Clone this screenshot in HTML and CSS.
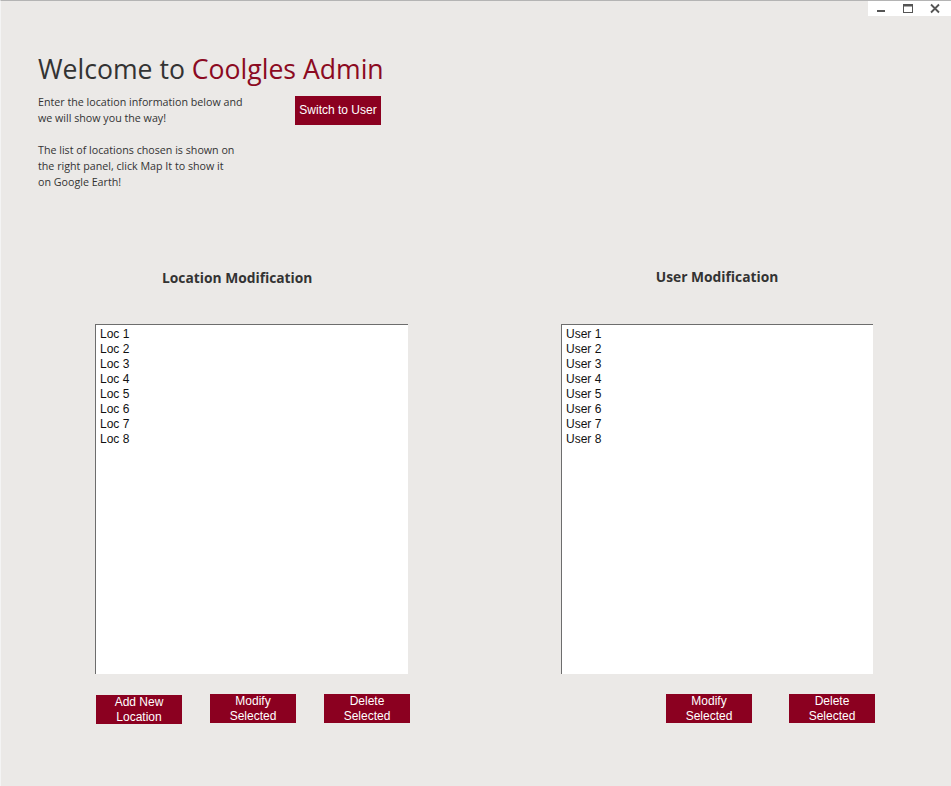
FILE: index.html
```html
<!DOCTYPE html>
<html>
<head>
<meta charset="utf-8">
<link rel="stylesheet" href="styles.css">
</head>
<body>
<div class="window">
  <div class="controls">
    <span class="ctl"><svg width="12" height="12" viewBox="0 0 12 12"><rect x="2" y="7" width="8" height="2" fill="#555"/></svg></span>
    <span class="ctl"><svg width="12" height="12" viewBox="0 0 12 12"><rect x="1.5" y="1.5" width="9" height="8" fill="none" stroke="#555" stroke-width="1"/><rect x="1.5" y="1.5" width="9" height="2" fill="#555"/></svg></span>
    <span class="ctl"><svg width="12" height="12" viewBox="0 0 12 12"><path d="M2 1.5 L10 9.5 M10 1.5 L2 9.5" stroke="#555" stroke-width="1.8"/></svg></span>
  </div>
  <header class="intro">
    <h1 class="title">Welcome to <span class="brand">Coolgles Admin</span></h1>
    <div class="intro-row">
      <div class="intro-text">
        <p>Enter the location information below and<br>we will show you the way!</p>
        <p>The list of locations chosen is shown on<br>the right panel, click Map It to show it<br>on Google Earth!</p>
      </div>
      <button class="btn btn-switch">Switch to User</button>
    </div>
  </header>
  <main class="panels">
    <section class="panel panel-left">
      <h2 class="panel-title">Location Modification</h2>
      <div class="listbox">
        <div>Loc 1</div><div>Loc 2</div><div>Loc 3</div><div>Loc 4</div>
        <div>Loc 5</div><div>Loc 6</div><div>Loc 7</div><div>Loc 8</div>
      </div>
      <div class="actions actions-left">
        <button class="btn btn-add">Add New<br>Location</button>
        <button class="btn">Modify<br>Selected</button>
        <button class="btn">Delete<br>Selected</button>
      </div>
    </section>
    <section class="panel panel-right">
      <h2 class="panel-title center">User Modification</h2>
      <div class="listbox">
        <div>User 1</div><div>User 2</div><div>User 3</div><div>User 4</div>
        <div>User 5</div><div>User 6</div><div>User 7</div><div>User 8</div>
      </div>
      <div class="actions actions-right">
        <button class="btn">Modify<br>Selected</button>
        <button class="btn">Delete<br>Selected</button>
      </div>
    </section>
  </main>
</div>
</body>
</html>
```
FILE: styles.css
```css
html, body {
  margin: 0;
  padding: 0;
  background: #ebe9e7;
}
.window {
  position: relative;
  width: 950px;
  height: 785px;
  border-top: 1px solid #b4b4b4;
  border-left: 1px solid #f4f4f4;
  background: #ebe9e7;
  font-family: "Liberation Sans", Arial, sans-serif;
  overflow: hidden;
}
.controls {
  position: absolute;
  top: 0;
  right: 0;
  width: 83px;
  height: 15px;
  background: #fff;
  display: flex;
  justify-content: space-around;
  align-items: center;
  padding-right: 3px;
  box-sizing: border-box;
}
.ctl {
  display: flex;
  width: 20px;
  justify-content: center;
}
.intro {
  padding: 50px 0 0 37px;
}
.title {
  margin: 0;
  font-family: "Open Sans", "DejaVu Sans", sans-serif;
  font-weight: 400;
  font-size: 26.6px;
  line-height: 36px;
  color: #333;
  letter-spacing: 0;
}
.brand {
  color: #8b0a22;
}
.intro-row {
  display: flex;
  align-items: flex-start;
  margin-top: 7px;
}
.intro-text {
  width: 257px;
  font-family: "Open Sans", "DejaVu Sans", sans-serif;
  font-size: 10.7px;
  line-height: 16px;
  color: #333;
}
.intro-text p {
  margin: 0 0 16px 0;
}
.btn {
  flex-shrink: 0;
  width: 86px;
  height: 29px;
  padding: 0;
  border: none;
  background: #8b0020;
  color: #fff;
  font-family: "Liberation Sans", Arial, sans-serif;
  font-size: 12px;
  line-height: 15px;
}
.btn-switch {
  margin-top: 2px;
  height: 29px;
}
.panels {
  display: flex;
  padding: 63px 0 0 94px;
}
.panel {
  width: 313px;
}
.panel-right {
  margin-left: 153px;
  width: 314px;
}
.panel-title {
  margin: 0;
  height: 55px;
  font-family: "Open Sans", "DejaVu Sans", sans-serif;
  font-weight: 700;
  font-size: 13.8px;
  line-height: 18px;
  color: #333;
  padding-left: 67px;
}
.panel-title.center {
  padding-left: 0;
  padding-right: 2px;
  text-align: center;
  line-height: 16px;
}
.listbox {
  box-sizing: border-box;
  width: 313px;
  height: 350px;
  background: #fff;
  border-top: 1px solid #6d6d6d;
  border-left: 1px solid #6d6d6d;
  padding: 2px 0 0 4px;
  font-size: 12px;
  line-height: 15px;
  color: #111;
}
.panel-right .listbox {
  width: 312px;
}
.actions {
  display: flex;
  margin-top: 20px;
}
.actions-left {
  gap: 28px;
  padding-left: 1px;
}
.actions-left .btn-add {
  margin-top: 1px;
}
.actions-right {
  justify-content: flex-end;
  gap: 37px;
}
```
